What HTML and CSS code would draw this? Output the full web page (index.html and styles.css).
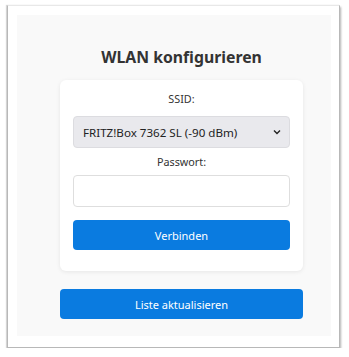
FILE: index.html
```html
<!DOCTYPE html>
<html lang="de">
<head>
<meta charset="utf-8">
<title>WLAN konfigurieren</title>
<link rel="stylesheet" href="styles.css">
</head>
<body>
<div class="window">
  <div class="page">
    <div class="content">
      <h1 class="title">WLAN konfigurieren</h1>
      <form class="card">
        <label class="label" for="ssid">SSID:</label>
        <div class="select-wrap">
          <select id="ssid" class="select">
            <option>FRITZ!Box 7362 SL (-90 dBm)</option>
          </select>
          <svg class="chev" width="8" height="6" viewBox="0 0 8 6"><path d="M1 1.5 L4 4.5 L7 1.5" fill="none" stroke="#222" stroke-width="1.4"/></svg>
        </div>
        <label class="label" for="pw">Passwort:</label>
        <input id="pw" class="input" type="password">
        <button type="button" class="btn btn-card">Verbinden</button>
      </form>
      <button type="button" class="btn btn-wide">Liste aktualisieren</button>
    </div>
  </div>
</div>
</body>
</html>
```
FILE: styles.css
```css
html, body {
  margin: 0;
  padding: 0;
  background: #ffffff;
}
body {
  font-family: "Noto Sans", "Open Sans", sans-serif;
  color: #333;
}
.window {
  margin: 5px 9px 0 7px;
  height: 343px;
  box-sizing: border-box;
  background: #fff;
  border: 1px solid #b8b8b8;
  border-top-color: #e8e8e8;
  box-shadow: 1px 2px 2px rgba(0,0,0,0.3), -1px 0 1px rgba(0,0,0,0.15);
  padding: 9px 8px 11px 9px;
}
.page {
  background: #f9f9f9;
  height: 100%;
  padding: 0 28px 0 43px;
  box-sizing: border-box;
}
.content {
  width: 243px;
  display: flex;
  flex-direction: column;
}
.title {
  margin: 0;
  padding-top: 31px;
  height: 65px;
  box-sizing: border-box;
  text-align: center;
  font-size: 15.8px;
  font-weight: 700;
  line-height: 22px;
  color: #333;
}
.card {
  background: #fff;
  border-radius: 6px;
  box-shadow: 0 1px 4px rgba(0,0,0,0.08);
  padding: 11px 13px 21px 13px;
  display: flex;
  flex-direction: column;
  margin: 0;
}
.label {
  display: block;
  text-align: center;
  font-size: 10.8px;
  line-height: 15px;
  color: #333;
}
.select-wrap {
  position: relative;
  margin-top: 10px;
}
.select {
  appearance: none;
  -webkit-appearance: none;
  width: 100%;
  height: 32px;
  box-sizing: border-box;
  background: #e9e9ed;
  border: 1px solid #dcdce0;
  border-radius: 4px;
  font-family: inherit;
  font-size: 11.6px;
  color: #222;
  padding: 0 20px 0 9px;
  margin: 0;
}
.chev {
  position: absolute;
  right: 9px;
  top: 13px;
}
.select-wrap + .label {
  margin-top: 6px;
}
.input {
  margin-top: 6px;
  height: 32px;
  box-sizing: border-box;
  width: 100%;
  border: 1px solid #dedede;
  border-radius: 4px;
  background: #fff;
}
.btn {
  display: block;
  background: #0a7be0;
  color: #fff;
  border: none;
  border-radius: 4px;
  font-family: inherit;
  font-size: 11px;
  height: 30px;
  width: 100%;
  cursor: pointer;
}
.btn-card {
  margin-top: 13px;
}
.btn-wide {
  margin-top: 18px;
}
```
